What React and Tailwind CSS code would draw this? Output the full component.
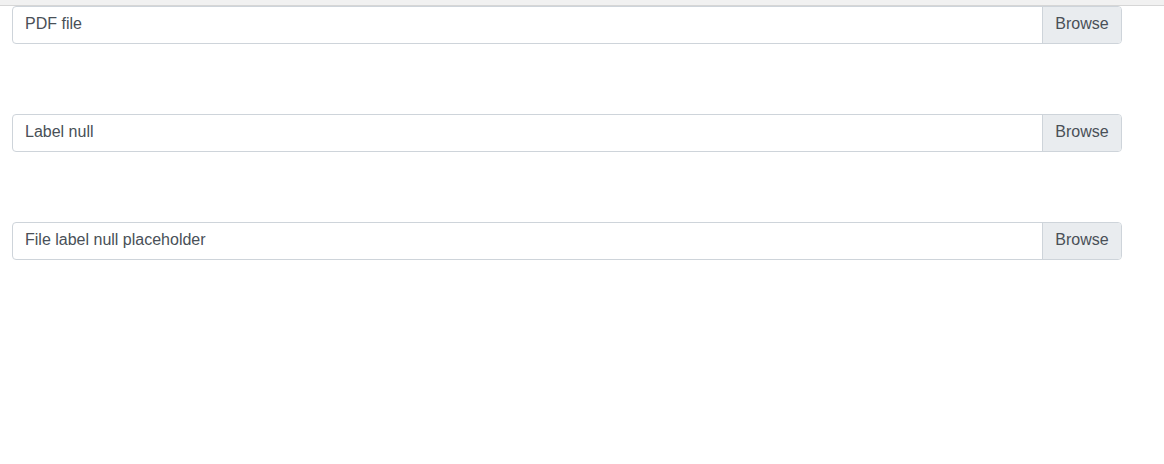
import React from "react";

function FileInput({ label }) {
  return (
    <div className="relative flex h-[38px] w-[1110px] rounded-[4px] border border-[#ced4da] bg-white">
      <div className="flex flex-1 items-center px-3 pb-[2px] text-[16px] leading-6 text-[#495057]">{label}</div>
      <div className="flex w-[79px] items-center justify-center rounded-r-[3px] border-l border-[#ced4da] bg-[#e9ecef] pb-[2px] text-[16px] leading-6 text-[#495057]">
        Browse
      </div>
    </div>
  );
}

export default function App() {
  return (
    <div className="h-[464px] w-full bg-white" style={{ fontFamily: '"Liberation Sans", Arial, sans-serif' }}>
      <div className="h-[6px] border-b border-[#d6d6d6] bg-[#f1f1f1]" />
      <div className="flex flex-col gap-[70px] pl-3">
        <FileInput label="PDF file" />
        <FileInput label="Label null" />
        <FileInput label="File label null placeholder" />
      </div>
    </div>
  );
}
